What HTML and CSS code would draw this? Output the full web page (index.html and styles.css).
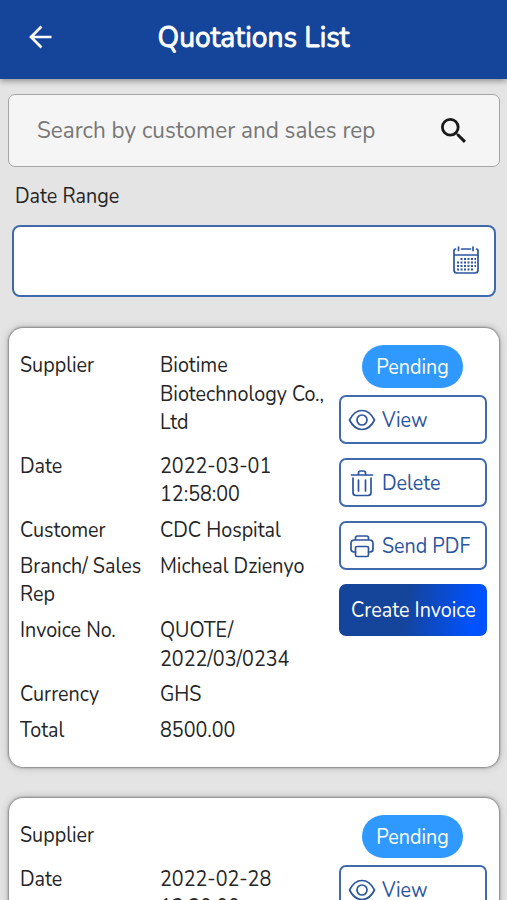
FILE: index.html
```html
<!DOCTYPE html>
<html lang="en">
<head>
<meta charset="utf-8">
<meta name="viewport" content="width=device-width, initial-scale=1">
<title>Quotations List</title>
<link rel="stylesheet" href="styles.css">
</head>
<body>
<svg class="sprite" aria-hidden="true">
  <symbol id="eye" viewBox="0 0 28 24"><path d="M1.500 12C4.500 6 9 2.500 14 2.500C19 2.500 23.500 6 26.500 12C23.500 18 19 21.500 14 21.500C9 21.500 4.500 18 1.500 12Z"/><circle cx="14" cy="12" r="5"/></symbol>
  <symbol id="trash" viewBox="0 0 28 30"><path d="M3.500 7H24.500M10.500 6V5Q10.500 3 12.500 3H15.500Q17.500 3 17.500 5V6M5 10V24.500Q5 27.500 8 27.500H20Q23 27.500 23 24.500V10M10.500 12V23M17.500 12V23"/></symbol>
  <symbol id="printer" viewBox="0 0 28 26"><path d="M7.500 19H6Q3 19 3 16V10.500Q3 7 6.500 7H21.500Q25 7 25 10.500V16Q25 19 22 19H20.500M7.500 6.500V5Q7.500 3 9.500 3H18.500Q20.500 3 20.500 5V6.500"/><rect x="7.500" y="13.500" width="13" height="10" rx="1.500"/></symbol>
</svg>
<header class="topbar">
  <svg class="back" viewBox="0 0 24 24"><path d="M22.500 12H2M12.500 1.500L2 12L12.500 22.500"/></svg>
  <h1>Quotations List</h1>
</header>
<main>
  <div class="search">
    <span>Search by customer and sales rep</span>
    <svg viewBox="3 3 17.500 17.500"><path d="M15.500 14h-.79l-.28-.27A6.471 6.471 0 0 0 16 9.500 6.500 6.500 0 1 0 9.500 16c1.610 0 3.090-.59 4.230-1.570l.27.28v.79l5 4.990L20.490 19l-4.990-5zm-6 0C7.010 14 5 11.990 5 9.500S7.010 5 9.500 5 14 7.010 14 9.500 11.990 14 9.500 14z"/></svg>
  </div>
  <div class="range-label"><span class="narrow">Date Range</span></div>
  <div class="range">
    <svg viewBox="0 0 28 30"><path d="M3.500 4Q2 4 2 6V25Q2 28 5 28H23Q26 28 26 25V6Q26 4 24.500 4M9.500 4H18.500M2 10H26M6.500 2V5.500M21 2V5.500"/><path class="days" d="M8.500 14H24M5 17.500H24M5 21H24M5 24.500H21"/></svg>
  </div>

  <article class="card">
    <dl class="details">
      <div class="row lead"><dt>Supplier</dt><dd>Biotime<br>Biotechnology Co.,<br>Ltd</dd></div>
      <div class="row"><dt>Date</dt><dd>2022-03-01<br>12:58:00</dd></div>
      <div class="row"><dt>Customer</dt><dd>CDC Hospital</dd></div>
      <div class="row"><dt>Branch/ Sales<br>Rep</dt><dd>Micheal Dzienyo</dd></div>
      <div class="row"><dt>Invoice No.</dt><dd>QUOTE/<br>2022/03/0234</dd></div>
      <div class="row"><dt>Currency</dt><dd>GHS</dd></div>
      <div class="row"><dt>Total</dt><dd>8500.00</dd></div>
    </dl>
    <div class="actions">
      <span class="badge"><span>Pending</span></span>
      <a class="btn"><svg class="i-eye"><use href="#eye"/></svg><span class="narrow">View</span></a>
      <a class="btn"><svg class="i-trash"><use href="#trash"/></svg><span class="narrow">Delete</span></a>
      <a class="btn"><svg class="i-printer"><use href="#printer"/></svg><span class="narrow">Send PDF</span></a>
      <a class="btn primary"><span>Create Invoice</span></a>
    </div>
  </article>

  <article class="card">
    <dl class="details">
      <div class="row lead"><dt>Supplier</dt><dd></dd></div>
      <div class="row"><dt>Date</dt><dd>2022-02-28<br>12:30:00</dd></div>
    </dl>
    <div class="actions">
      <span class="badge"><span>Pending</span></span>
      <a class="btn"><svg class="i-eye"><use href="#eye"/></svg><span class="narrow">View</span></a>
    </div>
  </article>
</main>
</body>
</html>
```
FILE: styles.css
```css
* { box-sizing: border-box; }
html { height: 100%; }
body {
  display: flex;
  flex-direction: column;
  margin: 0;
  height: 900px;
  overflow: hidden;
  background: #e4e4e4;
  color: #252525;
  font-family: Nunito, Lato, sans-serif;
  font-size: 21px;
  line-height: 28.4px;
}
.sprite { display: none; }
svg { display: block; flex: none; fill: none; stroke: currentColor; stroke-width: 1.7; stroke-linecap: round; stroke-linejoin: round; }

/* Condensed text */
.narrow, dt, dd { display: block; transform: scaleX(.938); transform-origin: 0 0; }
.badge span, .primary span { display: block; transform: scaleX(.938); }

.topbar {
  position: relative;
  display: grid;
  flex: none;
  grid-template-columns: 80px 1fr 80px;
  align-items: center;
  height: 79px;
  padding-bottom: 4px;
  background: #15449b;
  box-shadow: 0 2px 6px rgba(0, 0, 0, .38);
  color: #fff;
}
.back { width: 24px; height: 24px; margin: -2px 0 0 28.500px; stroke-width: 2.7; stroke-linecap: butt; stroke-linejoin: miter; }
h1 { margin: -2px 0 0; text-align: center; font-size: 29.5px; font-weight: 400; line-height: 40px; white-space: nowrap; -webkit-text-stroke: .9px #fff; transform: scaleX(.955); }
main { flex: 1; min-height: 0; overflow: hidden; padding: 15px 8px 0; }
.search {
  display: flex;
  align-items: center;
  justify-content: space-between;
  height: 73px;
  margin-right: -1px;
  padding: 0 33px 0 28px;
  border: 1px solid #a5a5a5;
  border-radius: 7px;
  background: #f5f5f5;
  color: #777;
  font-size: 23.5px;
}
.search span { transform: scaleX(.957); transform-origin: 0 0; white-space: nowrap; }
.search svg { width: 25px; height: 25px; fill: #191919; stroke: none; }
.range-label { padding: 15px 7px 0; }
.range {
  display: flex;
  align-items: center;
  justify-content: flex-end;
  height: 72px;
  margin: 15px 3px 0 4px;
  padding: 0 14px 3px;
  border: 2px solid #416aac;
  border-radius: 8px;
  background: #fff;
  color: #2c559f;
}
.range svg { width: 28px; height: 30px; }
.range .days { stroke-dasharray: 2 1.500; stroke-linecap: butt; stroke-width: 2; }
.card {
  display: flex;
  justify-content: space-between;
  height: 439px;
  margin: 31px 0 31px 1px;
  padding: 17px 12px 0 11px;
  border-radius: 14px;
  background: #fff;
  box-shadow: 0 0 2px 1px rgba(0, 0, 0, .35), 0 0 9px rgba(0, 0, 0, .24);
}
.details { margin: 6px 0 0; }
.row { display: grid; grid-template-columns: 140px 178px; margin-bottom: 7.500px; white-space: nowrap; }
.row.lead { margin-bottom: 15px; }
dd { margin: 0; }
.actions { display: flex; flex-direction: column; width: 148px; flex: none; margin-left: -20px; }
.badge {
  align-self: center;
  width: 101px;
  height: 43px;
  margin-right: 1px;
  border-radius: 22px;
  background: #3099ff;
  color: #fff;
  line-height: 44px;
  text-align: center;
}
.btn {
  display: flex;
  align-items: center;
  height: 49px;
  margin-bottom: 14px;
  padding-left: 7px;
  border: 2px solid #416aac;
  border-radius: 7px;
  color: #2c559f;
  white-space: nowrap;
}
.badge + .btn { margin-top: 7px; }
.btn svg { margin-right: 6px; }
.i-eye { width: 28px; height: 24px; }
.i-trash { width: 28px; height: 30px; }
.i-printer { width: 28px; height: 26px; }
.primary {
  justify-content: center;
  height: 52px;
  padding: 0;
  border: 0;
  background: linear-gradient(100deg, #15449b 45%, #0052ff 90%);
  color: #fff;
}
```
